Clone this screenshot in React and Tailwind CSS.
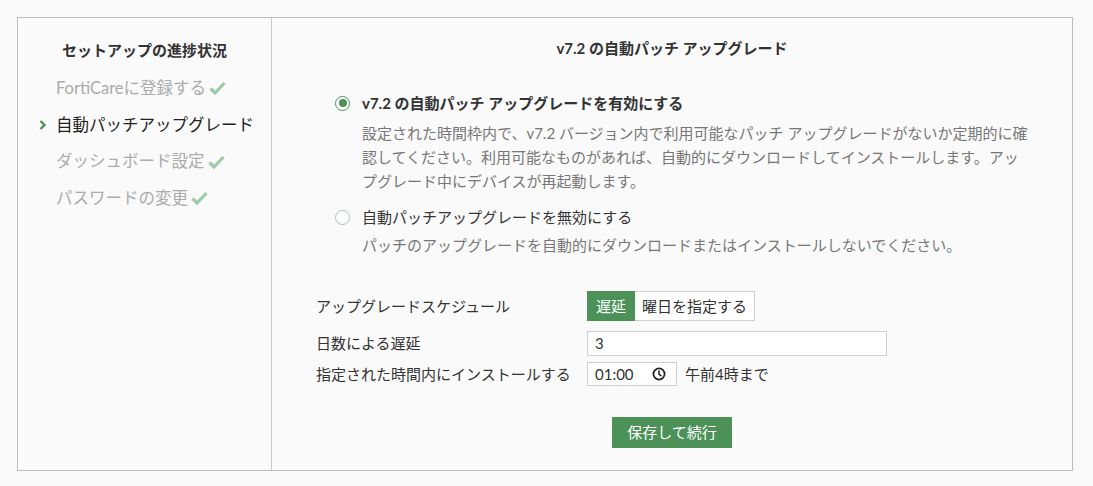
import React from 'react';

const FONT = { fontFamily: "Lato, 'Noto Sans CJK JP', sans-serif" };

const STEPS = [
  { label: 'FortiCareに登録する', status: 'done' },
  { label: '自動パッチアップグレード', status: 'active' },
  { label: 'ダッシュボード設定', status: 'done' },
  { label: 'パスワードの変更', status: 'done' },
];

function Check() {
  return (
    <svg width="17" height="14" viewBox="0 0 17 14" className="ml-[3px] shrink-0">
      <path d="M1.5 7.5 L6 12 L15.5 2" fill="none" stroke="#9dcba6" strokeWidth="3.2" />
    </svg>
  );
}

function Chevron() {
  return (
    <svg width="8" height="10" viewBox="0 0 8 10" className="absolute left-[-17px] top-[13px]">
      <path d="M1.5 1 L5.5 5 L1.5 9" fill="none" stroke="#4b9158" strokeWidth="2.4" />
    </svg>
  );
}

function Radio({ checked }) {
  return (
    <span
      className={`w-[15px] h-[15px] rounded-full border flex items-center justify-center shrink-0 bg-white ${
        checked ? 'border-[#4b9158]' : 'border-[#9dcba6]'
      }`}
    >
      {checked && <span className="w-[8px] h-[8px] rounded-full bg-[#4b9158]"></span>}
    </span>
  );
}

function ClockIcon() {
  return (
    <svg width="14" height="14" viewBox="0 0 14 14">
      <circle cx="7" cy="7" r="5.6" fill="none" stroke="#222" strokeWidth="1.8" />
      <path d="M7 3.6 V7.2 L9.4 9.2" fill="none" stroke="#222" strokeWidth="1.6" />
    </svg>
  );
}

export default function App() {
  return (
    <div className="w-[1093px] h-[486px] bg-[#fafafa] pt-[17px] pl-[17px]" style={FONT}>
      <div className="w-[1056px] h-[454px] border border-[#bdbdbd] flex">
        {/* Setup progress sidebar */}
        <div className="w-[254px] border-r border-[#c8c8c8] flex flex-col">
          <h2 className="mt-[21px] text-center text-[15px] font-bold text-[#333] leading-[22px]">
            セットアップの進捗状況
          </h2>
          <ul className="mt-[9px] pl-[38px]">
            {STEPS.map((step) => (
              <li
                key={step.label}
                className={`relative h-[36.7px] flex items-center text-[16.5px] ${
                  step.status === 'active' ? 'text-[#222]' : 'text-[#ababab]'
                }`}
              >
                {step.status === 'active' && <Chevron />}
                <span>{step.label}</span>
                {step.status === 'done' && <Check />}
              </li>
            ))}
          </ul>
        </div>

        {/* Auto patch upgrade panel */}
        <div className="flex-1 flex flex-col text-[15px]">
          <h1 className="mt-[19px] text-center font-bold text-[#333] leading-[22px]">
            v7.2 の自動パッチ アップグレード
          </h1>

          <div className="pl-[63px] mt-[34px]">
            <div className="flex items-center gap-[12px] h-[20px]">
              <Radio checked />
              <span className="font-bold text-[#333]">v7.2 の自動パッチ アップグレードを有効にする</span>
            </div>
            <p className="mt-[8px] ml-[27px] w-[670px] leading-[24px] text-[#777]">
              設定された時間枠内で、v7.2 バージョン内で利用可能なパッチ アップグレードがないか定期的に確認してください。利用可能なものがあれば、自動的にダウンロードしてインストールします。アップグレード中にデバイスが再起動します。
            </p>

            <div className="mt-[14px] flex items-center gap-[12px] h-[20px]">
              <Radio />
              <span className="text-[#333]">自動パッチアップグレードを無効にする</span>
            </div>
            <p className="mt-[6px] ml-[27px] leading-[24px] text-[#777]">
              パッチのアップグレードを自動的にダウンロードまたはインストールしないでください。
            </p>
          </div>

          <div className="pl-[44px] mt-[34px] text-[#333]">
            <div className="flex items-center h-[30px]">
              <span className="w-[271px]">アップグレードスケジュール</span>
              <div className="flex h-[30px]">
                <span className="px-[9px] flex items-center bg-[#4b9158] text-white">遅延</span>
                <span className="px-[7px] flex items-center bg-white border border-l-0 border-[#cfcfcf]">
                  曜日を指定する
                </span>
              </div>
            </div>
            <div className="mt-[10px] flex items-center h-[25px]">
              <span className="w-[271px]">日数による遅延</span>
              <div className="w-[300px] h-[25px] bg-white border border-[#cfcfcf] pl-[7px] flex items-center">3</div>
            </div>
            <div className="mt-[6px] flex items-center h-[24px]">
              <span className="w-[271px]">指定された時間内にインストールする</span>
              <div className="w-[90px] h-[24px] bg-white border border-[#cfcfcf] pl-[7px] pr-[10px] flex items-center justify-between">
                <span>01:00</span>
                <ClockIcon />
              </div>
              <span className="ml-[8px]">午前4時まで</span>
            </div>
          </div>

          <div className="mt-[31px] flex justify-center">
            <button className="h-[31px] px-[15px] bg-[#4b9158] text-white text-[15px]">保存して続行</button>
          </div>
        </div>
      </div>
    </div>
  );
}
